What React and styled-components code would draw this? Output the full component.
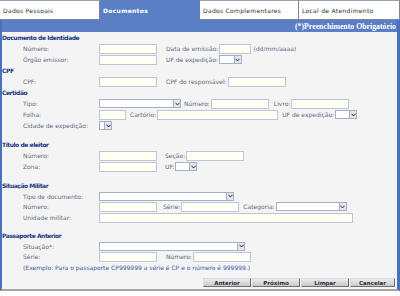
import React from 'react';
import styled, { createGlobalStyle } from 'styled-components';

const Global = createGlobalStyle`
  html, body { margin: 0; padding: 0; background: #ffffff; }
  body { font-family: "DejaVu Sans", Verdana, sans-serif; }
  * { box-sizing: border-box; }
`;

const BLUE = '#5a7fc5';

const Page = styled.div`
  width: 400px;
  height: 296px;
  display: flex;
  flex-direction: column;
  background: #fff;
`;

const Tabs = styled.div`
  display: flex;
  height: 20px;
`;

const Tab = styled.div`
  width: ${p => p.$w}px;
  height: 20px;
  display: flex;
  align-items: center;
  padding-left: 3px;
  font-size: 6px;
  letter-spacing: 0.3px;
  white-space: nowrap;
  background: ${p => (p.$active ? BLUE : '#ffffff')};
  color: ${p => (p.$active ? '#ffffff' : '#2a2a2a')};
  font-weight: ${p => (p.$active ? 'bold' : 'normal')};
  border-top: 1px solid ${p => (p.$active ? BLUE : '#9aa2b4')};
  border-right: 1px solid ${p => (p.$active ? BLUE : '#7d879c')};
  border-bottom: 1px solid ${p => (p.$active ? BLUE : '#7d879c')};
`;

const Form = styled.div`
  height: 271px;
  display: flex;
  flex-direction: column;
  background: #f4f4f4;
  border-left: 2px solid #4a70c0;
  border-right: 3px solid #4a70c0;
  border-bottom: 2px solid #a4a4a4;
`;

const Bar = styled.div`
  height: 12px;
  background: ${BLUE};
  display: flex;
  align-items: center;
  justify-content: flex-end;
  padding-right: 1px;
  color: #ffffff;
  font-family: "Liberation Serif", "Times New Roman", serif;
  font-weight: bold;
  font-size: 7.8px;
  white-space: nowrap;
`;

const Heading = styled.div`
  height: 11px;
  display: flex;
  align-items: center;
  margin-top: ${p => p.$space || 0}px;
  font-size: 6px;
  font-weight: bold;
  letter-spacing: -0.45px;
  color: #1c3784;
  white-space: nowrap;
`;

const Row = styled.div`
  height: ${p => p.$h || 11}px;
  display: flex;
  align-items: center;
  padding-left: 21px;
`;

const Label = styled.span`
  width: 76px;
  flex: none;
  font-size: 6px;
  color: #5e6780;
  white-space: nowrap;
`;

const SubLabel = styled.span`
  flex: none;
  margin-left: ${p => p.$gap ?? 8}px;
  margin-right: ${p => p.$after ?? 1}px;
  font-size: 6px;
  color: #5e6780;
  white-space: nowrap;
`;

const Input = styled.input`
  width: ${p => p.$w}px;
  height: 10px;
  flex: none;
  margin: 0;
  padding: 0;
  border: 1px solid #bcc6d8;
  background: #fffff3;
  outline: none;
`;

const SelectBox = styled.div`
  width: ${p => p.$w}px;
  height: 9px;
  flex: none;
  display: flex;
  justify-content: flex-end;
  border: 1px solid #a3b0c8;
  background: #ffffff;
`;

const Arrow = styled.div`
  width: 7px;
  height: 100%;
  display: flex;
  align-items: center;
  justify-content: center;
  background: #e2e5ec;
  border-left: 1px solid #a3b0c8;
`;

const Select = ({ w }) => (
  <SelectBox $w={w}>
    <Arrow>
      <svg width="5" height="4" viewBox="0 0 5 4">
        <path d="M0.5 0.8 L2.5 3 L4.5 0.8" fill="none" stroke="#333" strokeWidth="1" />
      </svg>
    </Arrow>
  </SelectBox>
);

const Example = styled.span`
  font-size: 6px;
  color: #3a55a6;
  white-space: nowrap;
`;

const Buttons = styled.div`
  display: flex;
  justify-content: flex-end;
  gap: 1px;
  padding-right: 2px;
  margin-top: auto;
  margin-bottom: 2px;
`;

const Button = styled.div`
  width: ${p => p.$w || 48}px;
  height: 9px;
  display: flex;
  align-items: center;
  justify-content: center;
  font-size: 5.5px;
  font-weight: bold;
  color: #2a2f3c;
  background: linear-gradient(#ececec, #c9c9c9);
  border: 1px solid #6f6f6f;
  border-top-color: #dcdcdc;
  border-left-color: #dcdcdc;
  white-space: nowrap;
`;

export default function App() {
  return (
    <Page>
      <Global />
      <Tabs>
        <Tab $w={100}>Dados Pessoais</Tab>
        <Tab $w={100} $active>Documentos</Tab>
        <Tab $w={99}>Dados Complementares</Tab>
        <Tab $w={101}>Local de Atendimento</Tab>
      </Tabs>
      <Form>
        <Bar>(*)Preenchimento Obrigatório</Bar>

        <Heading>Documento de Identidade</Heading>
        <Row>
          <Label>Número:</Label>
          <Input $w={58} />
          <SubLabel $gap={9}>Data de emissão:</SubLabel>
          <Input $w={32} />
          <SubLabel $gap={2}>(dd/mm/aaaa)</SubLabel>
        </Row>
        <Row>
          <Label>Órgão emissor:</Label>
          <Input $w={58} />
          <SubLabel $gap={9}>UF de expedição:</SubLabel>
          <Select w={23} />
        </Row>

        <Heading>CPF</Heading>
        <Row>
          <Label>CPF:</Label>
          <Input $w={58} />
          <SubLabel $gap={9}>CPF do responsável:</SubLabel>
          <Input $w={58} />
        </Row>

        <Heading>Certidão</Heading>
        <Row>
          <Label>Tipo:</Label>
          <Select w={82} />
          <SubLabel $gap={3}>Número:</SubLabel>
          <Input $w={58} />
          <SubLabel $gap={5}>Livro:</SubLabel>
          <Input $w={58} />
        </Row>
        <Row>
          <Label>Folha:</Label>
          <Input $w={27} />
          <SubLabel $gap={4}>Cartório:</SubLabel>
          <Input $w={121} />
          <SubLabel $gap={4}>UF de expedição:</SubLabel>
          <Select w={22} />
        </Row>
        <Row>
          <Label>Cidade de expedição:</Label>
          <Select w={13} />
        </Row>

        <Heading $space={8}>Título de eleitor</Heading>
        <Row>
          <Label>Número:</Label>
          <Input $w={58} />
          <SubLabel $gap={8}>Seção:</SubLabel>
          <Input $w={58} />
        </Row>
        <Row>
          <Label>Zona:</Label>
          <Input $w={58} />
          <SubLabel $gap={8}>UF:</SubLabel>
          <Select w={22} />
        </Row>

        <Heading $space={8}>Situação Militar</Heading>
        <Row $h={10}>
          <Label>Tipo de documento:</Label>
          <Select w={135} />
        </Row>
        <Row>
          <Label>Número:</Label>
          <Input $w={58} />
          <SubLabel $gap={6}>Série:</SubLabel>
          <Input $w={58} />
          <SubLabel $gap={4}>Categoria:</SubLabel>
          <Select w={71} />
        </Row>
        <Row>
          <Label>Unidade militar:</Label>
          <Input $w={254} />
        </Row>

        <Heading $space={7}>Passaporte Anterior</Heading>
        <Row $h={10}>
          <Label>Situação*:</Label>
          <Select w={146} />
        </Row>
        <Row>
          <Label>Série:</Label>
          <Input $w={58} />
          <SubLabel $gap={9}>Número:</SubLabel>
          <Input $w={58} />
        </Row>
        <Row $h={10}>
          <Example>(Exemplo: Para o passaporte CP999999 a série é CP e o número é 999999.)</Example>
        </Row>

        <Buttons>
          <Button>Anterior</Button>
          <Button>Próximo</Button>
          <Button>Limpar</Button>
          <Button $w={45}>Cancelar</Button>
        </Buttons>
      </Form>
    </Page>
  );
}
